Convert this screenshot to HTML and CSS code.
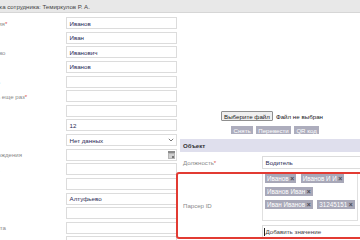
FILE: index.html
```html
<!DOCTYPE html>
<html lang="ru">
  <head>
    <meta charset="UTF-8" />
    <title>Карточка сотрудника</title>
    <link rel="stylesheet" href="styles.css">
  </head>
  <body>
    <div class="topbar">
      <span class="title">Карточка сотрудника: Темиркулов Р. А.</span>
    </div>

    <div class="page">
      <!-- personal data -->
      <div class="person">
        <div class="row"><label>Фамилия<b>*</b></label><div class="field">Иванов</div></div>
        <div class="row"><label>Имя</label><div class="field">Иван</div></div>
        <div class="row"><label>Отчество</label><div class="field">Иванович</div></div>
        <div class="row"><label>Логин<b>*</b></label><div class="field">Иванов</div></div>
        <div class="row"><label>Пароль</label><div class="field"></div></div>
        <div class="row"><label>Пароль еще раз<b>*</b></label><div class="field"></div></div>
        <div class="row"><label>E-mail<b>*</b></label><div class="field"></div></div>
        <div class="row"><label>Рейсов</label><div class="field">12</div></div>
        <div class="row"><label>Пол</label>
          <div class="field select">Нет данных
            <svg width="6" height="4" viewBox="0 0 6 4"><path d="M0.8 0.8 L3 3 L5.2 0.8" fill="none" stroke="#777" stroke-width="1"/></svg>
          </div>
        </div>
        <div class="row"><label>Дата рождения</label>
          <div class="field date">
            <svg width="7" height="8" viewBox="0 0 7 8"><rect x="0" y="0" width="7" height="8" fill="#b5b5b5"/><rect x="0" y="0" width="7" height="2" fill="#8a8a8a"/><rect x="1" y="3" width="5" height="4" fill="#d0d0d0"/><rect x="4" y="5" width="2" height="2" fill="#777"/></svg>
          </div>
        </div>
        <div class="row"><label>Страна</label><div class="field"></div></div>
        <div class="row"><label>Регион</label><div class="field"></div></div>
        <div class="row"><label>Район</label><div class="field">Алтуфьево</div></div>
        <div class="row"><label>Место</label><div class="field"></div></div>
        <div class="row"><label>Эл. почта</label><div class="field"></div></div>
        <div class="row"><label>Примечание</label><div class="field"></div></div>
      </div>

      <!-- photo and object -->
      <div class="extra">
        <div class="photo"></div>
        <div class="upload">
          <span class="file-btn">Выберите файл</span>
          <span>Файл не выбран</span>
        </div>
        <div class="actions">
          <span class="act">Снять</span>
          <span class="act">Перевести</span>
          <span class="act">QR код</span>
        </div>

        <div class="section">Объект</div>

        <div class="obj-row">
          <label>Должность<b>*</b></label>
          <div class="field">Водитель</div>
        </div>

        <div class="obj-row marked">
          <label>Парсер ID</label>
          <div class="multi">
            <div class="tags">
              <span class="tag">Иванов <i>×</i></span>
              <span class="tag">Иванов И И <i>×</i></span>
              <span class="tag">Иванов Иван <i>×</i></span>
              <span class="tag">Иван Иванов <i>×</i></span>
              <span class="tag">31245151 <i>×</i></span>
            </div>
            <div class="field add"><span class="caret"></span>Добавить значение</div>
          </div>
        </div>
      </div>
    </div>
  </body>
</html>
```

FILE: styles.css
```css
body {
  margin: 0;
  width: 360px;
  height: 240px;
  overflow: hidden;
  background-color: #fff;
  font-family: "Liberation Sans", Arial, sans-serif;
  font-size: 6.2px;
  color: #333;
}
.topbar {
  height: 12px;
  background-color: #e8e8e8;
  border-bottom: 1px solid #d6d6d6;
  display: flex;
  align-items: center;
  overflow: hidden;
  white-space: nowrap;
}
.title {
  margin-left: -20px;
  font-size: 6.1px;
  color: #444;
}
.page {
  display: flex;
}
.person {
  width: 198px;
  margin-left: -21px;
  padding-top: 4px;
  flex-shrink: 0;
  display: flex;
  flex-direction: column;
  gap: 2.64px;
}
.row {
  display: grid;
  grid-template-columns: 87px 111px;
  align-items: center;
  height: 12px;
}
label {
  color: #8a8a8a;
  white-space: nowrap;
  font-size: 6.1px;
}
label b {
  color: #e04848;
  font-weight: normal;
}
.field {
  box-sizing: border-box;
  height: 12px;
  border: 1px solid #dcdcdc;
  background-color: #fff;
  padding: 0 2.5px;
  display: flex;
  align-items: center;
  font-size: 6.2px;
  color: #2a2a55;
  white-space: nowrap;
}
.select {
  justify-content: space-between;
}
.date {
  justify-content: flex-end;
  padding-right: 1px;
}
.extra {
  width: 182px;
  margin-left: 3px;
  flex-shrink: 0;
}
.photo {
  height: 98px;
}
.upload {
  display: flex;
  align-items: center;
  gap: 3px;
  padding-left: 41px;
  height: 10px;
  font-size: 6.2px;
  color: #222;
  white-space: nowrap;
}
.file-btn {
  box-sizing: border-box;
  height: 10px;
  padding: 0 2px;
  display: flex;
  align-items: center;
  background-color: #efefef;
  border: 1px solid #8f8f8f;
  border-radius: 1px;
}
.actions {
  display: flex;
  gap: 2.5px;
  padding-left: 51px;
  margin-top: 5px;
  height: 8px;
}
.act {
  display: flex;
  align-items: center;
  padding: 0 2.6px;
  background-color: #adadbd;
  color: #fff;
  font-size: 6.1px;
  white-space: nowrap;
}
.section {
  margin-top: 5px;
  height: 13px;
  display: flex;
  align-items: center;
  padding-left: 3px;
  background-color: #dfdfed;
  font-weight: bold;
  font-size: 6.1px;
  color: #333;
}
.obj-row {
  display: grid;
  grid-template-columns: 82px 99px;
  align-items: center;
  margin-top: 4px;
}
.obj-row label {
  padding-left: 3px;
}
.obj-row .field {
  height: 13px;
}
.marked {
  position: relative;
  margin-top: 3px;
}
.marked::after {
  content: "";
  position: absolute;
  top: 0;
  bottom: -1px;
  left: -4px;
  right: -6px;
  border: 2px solid #e23b33;
  border-radius: 3px;
}
.tags {
  box-sizing: border-box;
  width: 96px;
  height: 49px;
  border: 1px solid #e0e0e0;
  padding: 1px 2px;
  display: flex;
  flex-wrap: wrap;
  align-content: flex-start;
  column-gap: 4.5px;
  row-gap: 4px;
}
.tag {
  height: 9px;
  display: flex;
  align-items: center;
  gap: 1.5px;
  padding: 0 2px;
  background-color: #a8a8b8;
  color: #fff;
  font-size: 6.3px;
  white-space: nowrap;
}
.tag i {
  font-style: normal;
  font-weight: bold;
  color: #4a4a55;
  font-size: 6.8px;
}
.add {
  margin-top: 4px;
  color: #444;
  padding-left: 1px;
}
.caret {
  width: 1px;
  height: 8px;
  background-color: #222;
  margin-right: 0.5px;
}
```
